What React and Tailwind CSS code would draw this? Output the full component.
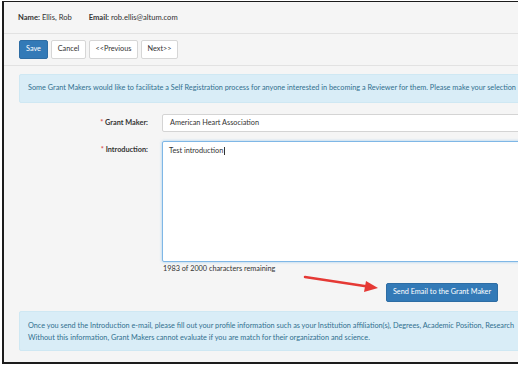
export default function App() {
  return (
    <div className="relative w-[518px] h-[368px] overflow-hidden bg-white pl-[2px] pt-[1px] font-['Lato',sans-serif] text-[7.3px] text-[#333]">
      <div className="h-[363px] border-l-2 border-t border-b-2 border-[#1c1c1c] bg-[#f5f5f5] overflow-hidden">
        <div className="h-[32px] flex items-center gap-[17px] pl-[14px] border-b border-[#e2e2e2] text-[7.6px]">
          <span>
            <b>Name:</b> Ellis, Rob
          </span>
          <span>
            <b>Email:</b> rob.ellis@altum.com
          </span>
        </div>

        <div className="h-[32px] flex items-start gap-[3px] pl-[15px] pt-[6px] border-b border-[#e2e2e2]">
          <button className="h-[19px] w-[29px] rounded-[2px] bg-[#337ab7] text-white border border-[#2e6da4]">Save</button>
          <button className="h-[19px] w-[35px] rounded-[2px] bg-white border border-[#d6d6d6]">Cancel</button>
          <button className="h-[19px] w-[49px] rounded-[2px] bg-white border border-[#d6d6d6]">&lt;&lt;Previous</button>
          <button className="h-[19px] w-[37px] rounded-[2px] bg-white border border-[#d6d6d6]">Next&gt;&gt;</button>
        </div>

        <div className="pl-[15px] pt-[8px]">
          <div className="w-[540px] h-[29px] flex items-center pl-[8px] rounded-[2px] bg-[#d9edf7] border border-[#cfe8f3] text-[#31708f] whitespace-nowrap">
            Some Grant Makers would like to facilitate a Self Registration process for anyone interested in becoming a Reviewer for them. Please make your selection
          </div>

          <div className="flex items-center mt-[11px]">
            <div className="w-[129px] shrink-0 text-right font-bold">
              <span className="text-[#d9534f]">* </span>Grant Maker:
            </div>
            <div className="ml-[14px] w-[400px] shrink-0 h-[18px] flex items-center pl-[7px] bg-white border border-[#d4d4d4] rounded-[2px]">
              American Heart Association
            </div>
          </div>

          <div className="flex items-start mt-[9px]">
            <div className="w-[129px] shrink-0 text-right font-bold pt-[4px]">
              <span className="text-[#d9534f]">* </span>Introduction:
            </div>
            <div className="ml-[14px] w-[400px] shrink-0 h-[121px] pl-[6px] pt-[4px] bg-white border border-[#7fb7e6] rounded-[2px] shadow-[0_0_3px_rgba(102,175,233,0.6)]">
              Test introduction<span className="inline-block w-px h-[8px] bg-[#333] align-middle ml-px" />
            </div>
          </div>

          <div className="pl-[144px] mt-[2px] leading-[9px]">1983 of 2000 characters remaining</div>

          <div className="pl-[367px] mt-[10px]">
            <button className="h-[19px] w-[112px] rounded-[2px] bg-[#337ab7] text-white border border-[#2e6da4]">
              Send Email to the Grant Maker
            </button>
          </div>

          <div className="w-[540px] h-[40px] mt-[9px] flex flex-col justify-center gap-[3px] pl-[8px] rounded-[2px] bg-[#d9edf7] border border-[#cfe8f3] text-[#31708f] whitespace-nowrap leading-[9px]">
            <div>Once you send the Introduction e-mail, please fill out your profile information such as your Institution affiliation(s), Degrees, Academic Position, Research</div>
            <div>Without this information, Grant Makers cannot evaluate if you are match for their organization and science.</div>
          </div>
        </div>
      </div>

      <svg className="absolute left-0 top-0" width="518" height="368" viewBox="0 0 518 368">
        <line x1="305" y1="277" x2="371" y2="287" stroke="#e53935" strokeWidth="2.5" strokeLinecap="round" />
        <polygon points="378,288 366,281 364,292" fill="#e53935" />
      </svg>
    </div>
  );
}
